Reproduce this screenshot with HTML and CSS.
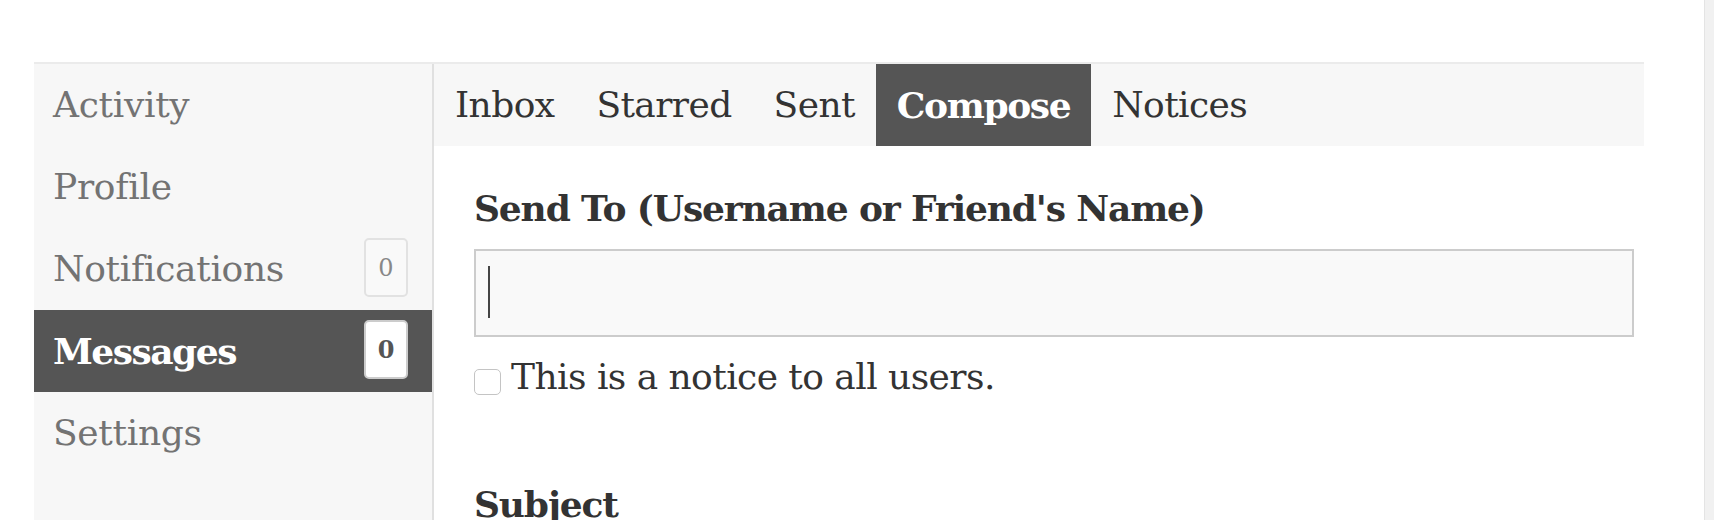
FILE: index.html
```html
<!DOCTYPE html>
<html lang="en">
<head>
<meta charset="utf-8">
<title>Messages - Compose</title>
<link rel="stylesheet" href="styles.css">
</head>
<body>
<div class="page">
  <div class="main">
    <div class="layout">
      <nav class="sidebar">
        <a class="side-item">Activity</a>
        <a class="side-item">Profile</a>
        <a class="side-item">Notifications <span class="badge">0</span></a>
        <a class="side-item active">Messages <span class="badge">0</span></a>
        <a class="side-item">Settings</a>
      </nav>
      <section class="content">
        <div class="tabs">
          <a class="tab">Inbox</a>
          <a class="tab">Starred</a>
          <a class="tab">Sent</a>
          <a class="tab active">Compose</a>
          <a class="tab">Notices</a>
        </div>
        <form class="compose">
          <label class="field-label">Send To (Username or Friend's Name)</label>
          <input class="text-input" type="text">
          <label class="check"><span class="box"></span>This is a notice to all users.</label>
          <label class="field-label subject">Subject</label>
        </form>
      </section>
    </div>
  </div>
  <div class="scrollbar"></div>
</div>
</body>
</html>
```

FILE: styles.css
```css
* { box-sizing: border-box; }
html, body { margin: 0; height: 100%; overflow: hidden; }
body { font-family: "DejaVu Serif", "Liberation Serif", serif; background: #fff; color: #333; }

.page { display: flex; height: 520px; }
.main { flex: 1; padding: 62px 60px 0 34px; }
.layout { display: flex; border-top: 2px solid #ebebeb; height: 458px; }

.sidebar { width: 400px; flex: none; background: #f7f7f7; border-right: 2px solid #e0e0e0; }
.side-item {
  display: flex; align-items: center; justify-content: space-between;
  height: 82px; padding: 0 24px 0 19px;
  font-size: 36px; line-height: 42px; color: #737373; letter-spacing: -0.3px;
}
.side-item.active { background: #555; color: #fff; font-weight: bold; letter-spacing: -1.5px; }
.badge {
  display: flex; align-items: center; justify-content: center;
  width: 44px; height: 59px; margin-top: -3px;
  border: 2px solid #e2e2e2; border-radius: 5px; background: #f9f9f9;
  font-size: 24px; line-height: 1; color: #888; font-weight: normal; letter-spacing: 0;
}
.side-item.active .badge { background: #fff; border-color: #ccc; color: #555; font-weight: bold; letter-spacing: 0; }

.content { flex: 1; display: flex; flex-direction: column; }
.tabs { display: flex; background: #f7f7f7; height: 82px; }
.tab { padding: 20px 21px; font-size: 36px; line-height: 42px; color: #333; letter-spacing: -0.6px; }
.tab.active { background: #555; color: #fff; font-weight: bold; letter-spacing: -1.4px; }

.compose { display: flex; flex-direction: column; padding: 41px 10px 0 40px; }
.field-label { font-size: 36px; line-height: 42px; font-weight: bold; color: #333; letter-spacing: -1.15px; }
.text-input {
  margin-top: 20px; height: 88px; width: 100%;
  border: 2px solid #ccc;
  background: #f9f9f9 linear-gradient(#444, #444) no-repeat 12px 15px / 2px 52px;
  font: inherit;
}
.check { display: flex; align-items: flex-start; gap: 10px; margin-top: 19px; font-size: 36px; line-height: 42px; color: #333; letter-spacing: -0.55px; }
.box { width: 27px; height: 26px; margin-top: 13px; border: 1px solid #c4c4c4; border-radius: 5px; background: #fff; }
.subject { margin-top: 85px; }

.scrollbar { width: 10px; flex: none; background: #f1f1f1; border-left: 1px solid #e4e4e4; }
```
